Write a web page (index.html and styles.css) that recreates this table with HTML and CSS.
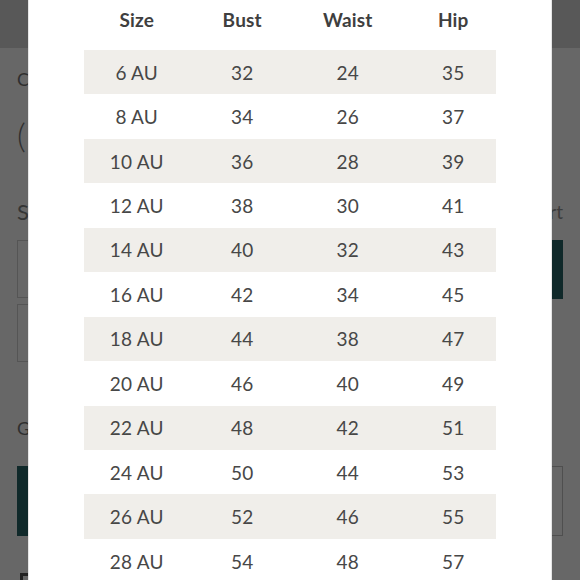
FILE: index.html
```html
<!DOCTYPE html>
<html>
<head>
<meta charset="utf-8">
<link rel="stylesheet" href="styles.css">
</head>
<body>
<div class="page">
  <div class="topbar"></div>
  <div class="content">
    <div class="crumb">Collection</div>
    <div class="price">(Dress)</div>
    <div class="size-line"><span>Size</span><span>Size Chart</span></div>
    <div class="select-row">
      <div class="select"></div>
      <div class="add"></div>
    </div>
    <div class="select second"></div>
    <div class="gift">Gift</div>
    <div class="btn-row">
      <div class="btn-dark"></div>
      <div class="btn-outline"></div>
    </div>
    <div class="foot"></div>
  </div>
</div>

<div class="modal">
  <div class="table">
    <div class="row head"><span>Size</span><span>Bust</span><span>Waist</span><span>Hip</span></div>
    <div class="row alt"><span>6 AU</span><span>32</span><span>24</span><span>35</span></div>
    <div class="row"><span>8 AU</span><span>34</span><span>26</span><span>37</span></div>
    <div class="row alt"><span>10 AU</span><span>36</span><span>28</span><span>39</span></div>
    <div class="row"><span>12 AU</span><span>38</span><span>30</span><span>41</span></div>
    <div class="row alt"><span>14 AU</span><span>40</span><span>32</span><span>43</span></div>
    <div class="row"><span>16 AU</span><span>42</span><span>34</span><span>45</span></div>
    <div class="row alt"><span>18 AU</span><span>44</span><span>38</span><span>47</span></div>
    <div class="row"><span>20 AU</span><span>46</span><span>40</span><span>49</span></div>
    <div class="row alt"><span>22 AU</span><span>48</span><span>42</span><span>51</span></div>
    <div class="row"><span>24 AU</span><span>50</span><span>44</span><span>53</span></div>
    <div class="row alt"><span>26 AU</span><span>52</span><span>46</span><span>55</span></div>
    <div class="row"><span>28 AU</span><span>54</span><span>48</span><span>57</span></div>
  </div>
</div>
</body>
</html>
```

FILE: styles.css
```css
* { box-sizing: border-box; }
html, body {
  margin: 0;
  padding: 0;
  width: 580px;
  height: 580px;
  overflow: hidden;
  background: #676767;
  font-family: "Lato", "Liberation Sans", sans-serif;
}
.page {
  width: 580px;
  height: 580px;
  display: flex;
  flex-direction: column;
}
.topbar {
  height: 48px;
  background: #585858;
  flex: none;
}
.content {
  padding: 0 17px;
  display: flex;
  flex-direction: column;
  color: #2f2f2f;
}
.crumb {
  margin-top: 20px;
  font-size: 18px;
  line-height: 22px;
  flex: none;
}
.price {
  margin-top: 25px;
  font-size: 34px;
  line-height: 40px;
  font-weight: 300;
  flex: none;
}
.size-line {
  margin-top: 44px;
  display: flex;
  justify-content: space-between;
  font-size: 22px;
  line-height: 26px;
  color: #353535;
  flex: none;
}
.size-line span:last-child { font-size: 19px; color: #3c3c3c; }
.select-row {
  margin-top: 15px;
  display: flex;
  gap: 12px;
  flex: none;
}
.select {
  height: 58px;
  border: 1px solid #555;
  flex: 1;
}
.select.second { margin-top: 5px; flex: none; width: 300px; }
.add {
  width: 120px;
  height: 59px;
  background: #10292a;
}
.gift {
  margin-top: 56px;
  font-size: 18px;
  line-height: 20px;
  flex: none;
}
.btn-row {
  margin-top: 28px;
  display: flex;
  gap: 12px;
  flex: none;
}
.btn-dark {
  flex: 1;
  height: 70px;
  background: #10292a;
}
.btn-outline {
  flex: 1;
  height: 70px;
  border: 1px solid #4f4f4f;
}
.foot {
  margin-top: 37px;
  width: 14px;
  height: 10px;
  margin-left: 3px;
  border-top: 3px solid #222;
  border-left: 3px solid #222;
  flex: none;
}

.modal {
  position: absolute;
  top: 0;
  left: 28px;
  width: 524px;
  height: 580px;
  background: #fff;
  border-left: 1px solid #e6e6e6;
  border-right: 1px solid #e6e6e6;
  padding: 0 55px;
  overflow: hidden;
}
.table {
  width: 412px;
  display: flex;
  flex-direction: column;
}
.row {
  display: grid;
  grid-template-columns: repeat(4, 105.5px);
  height: 44.45px;
  align-items: center;
  font-size: 19px;
  color: #474747;
  letter-spacing: 0.2px;
  flex: none;
}
.row span { text-align: center; white-space: nowrap; }
.row.alt { background: #f0eeea; }
.row.head {
  height: 38px;
  margin-bottom: 12px;
  font-weight: 700;
  color: #3f3f3f;
}
```
